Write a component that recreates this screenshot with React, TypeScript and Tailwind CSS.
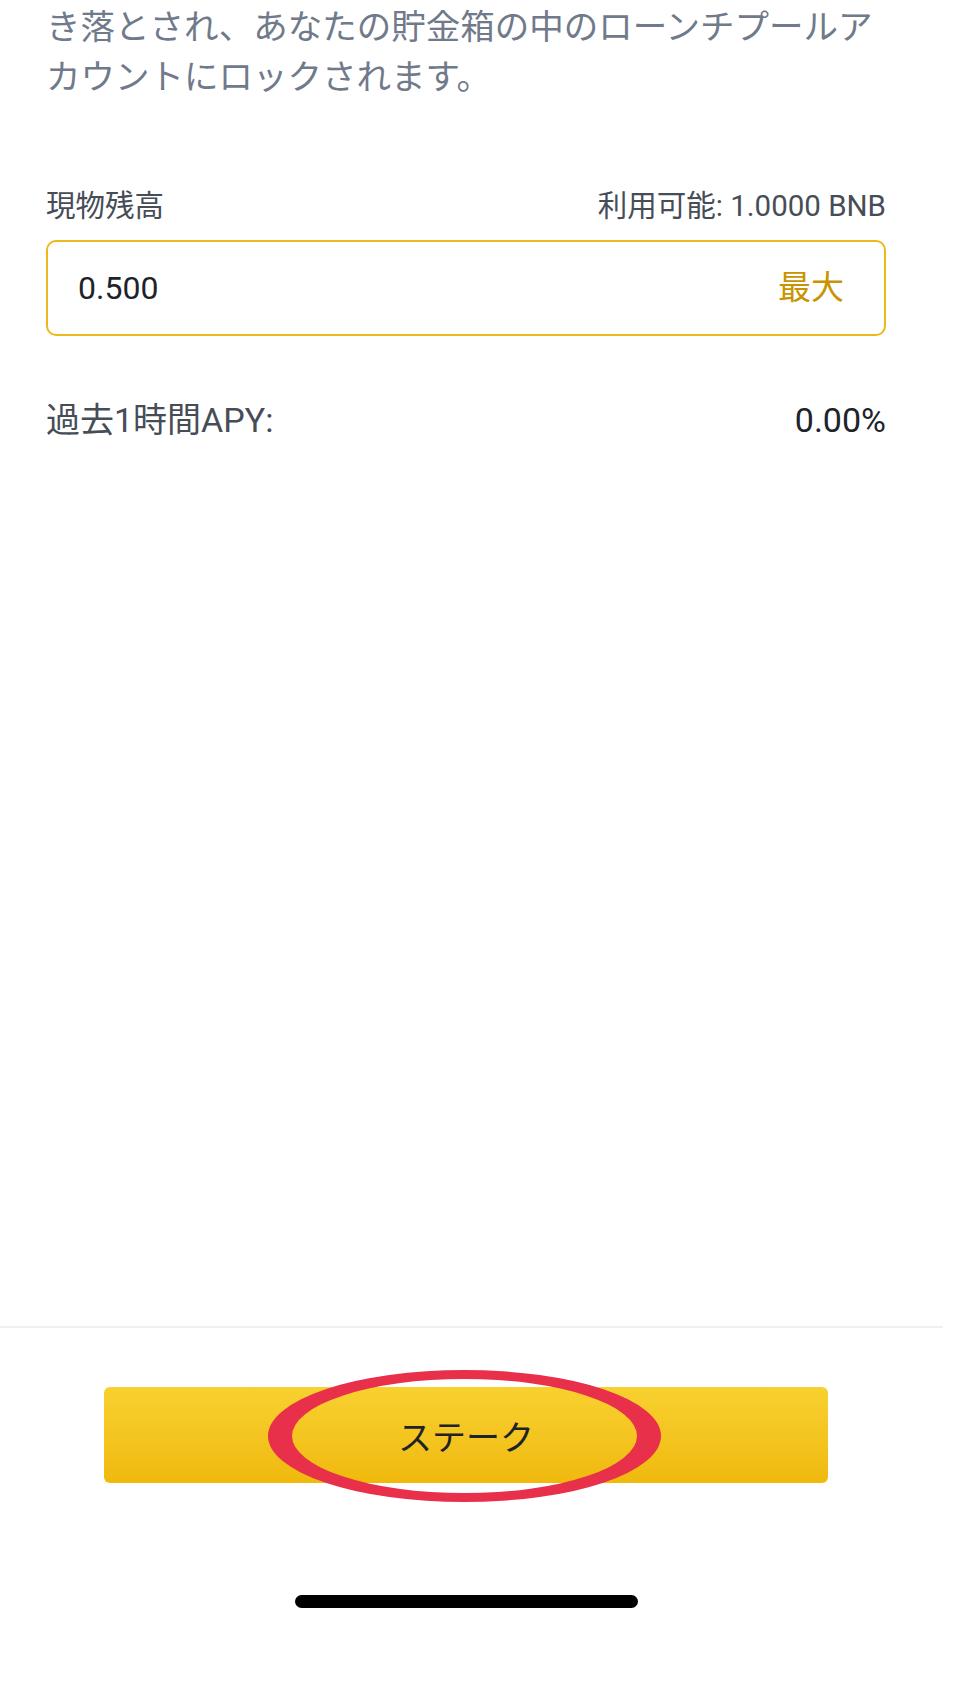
export default function App() {
  return (
    <div className="relative flex h-[1706px] w-[960px] flex-col overflow-hidden bg-white font-['Roboto','Noto_Sans_CJK_JP',sans-serif]">
      {/* Form area */}
      <div className="flex h-[1326px] w-[932px] flex-col px-[46px]">
        <p className="mt-[2px] text-[34.5px] leading-[50px] text-[#707a8a]">
          き落とされ、あなたの貯金箱の中のローンチプールアカウントにロックされます。
        </p>

        <div className="mt-[86px] flex items-center justify-between text-[29.5px] leading-[36px] text-[#474d57]">
          <span>現物残高</span>
          <span>利用可能: 1.0000 BNB</span>
        </div>

        <div className="mt-[16px] flex h-[96px] items-center justify-between rounded-[10px] border-2 border-[#ecb91c] pl-[30px] pr-[40px]">
          <span className="text-[32px] text-[#1e2329]">0.500</span>
          <span className="text-[33px] text-[#c99400]">最大</span>
        </div>

        <div className="mt-[64px] flex items-center justify-between text-[34px] leading-[40px]">
          <span className="text-[#474d57]">過去1時間APY:</span>
          <span className="text-[#1e2329]">0.00%</span>
        </div>
      </div>

      {/* Footer */}
      <div className="h-[2px] w-[943px] bg-[#eef0f2]" />
      <div className="flex w-[932px] flex-col items-center">
        <div className="relative mt-[59px] w-[724px]">
          <button className="flex h-[96px] w-full items-center justify-center rounded-[6px] bg-linear-to-b from-[#f8d12f] to-[#f0b90b] text-[34px] text-[#1e2329] font-['Noto_Sans_CJK_JP',sans-serif]">
            ステーク
          </button>
          {/* hand-drawn highlight */}
          <svg
            className="pointer-events-none absolute left-[164px] top-[-17px]"
            width="393"
            height="132"
            viewBox="0 0 393 132"
          >
            <path
              fillRule="evenodd"
              fill="#e8304a"
              d="M0 66a196.5 66 0 1 0 393 0a196.5 66 0 1 0 -393 0Z M24 66a172.5 57 0 1 0 345 0a172.5 57 0 1 0 -345 0Z"
            />
          </svg>
        </div>
        <div className="mt-[112px] h-[13px] w-[343px] rounded-full bg-black" />
      </div>
    </div>
  );
}
